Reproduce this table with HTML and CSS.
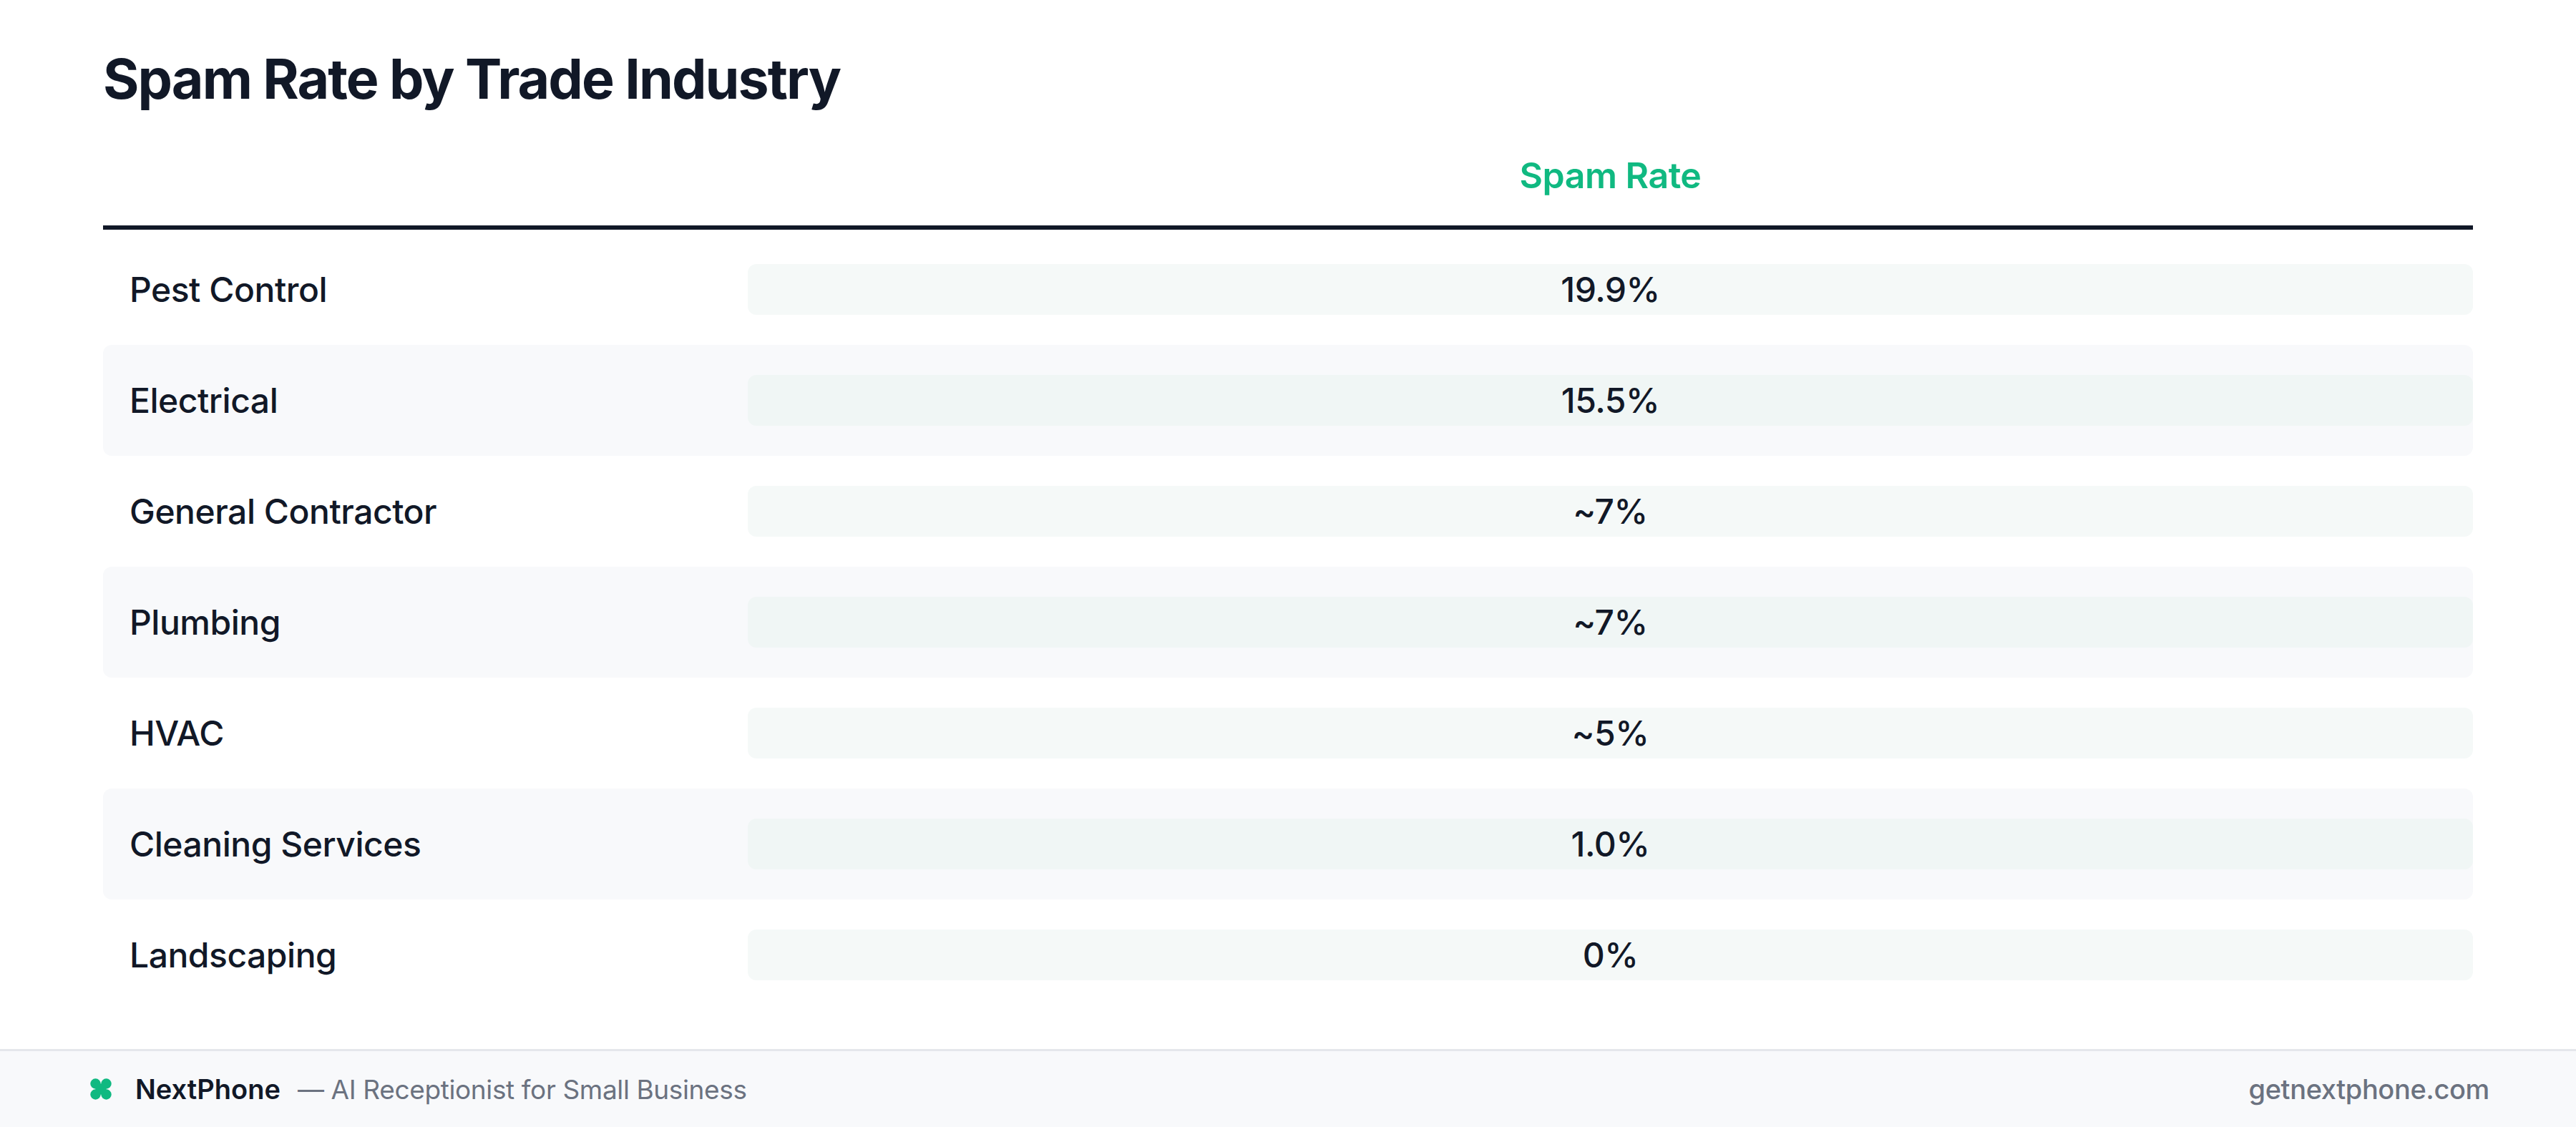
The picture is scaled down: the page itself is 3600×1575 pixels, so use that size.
FILE: index.html
```html
<!DOCTYPE html>
<html lang="en">
<head>
<meta charset="utf-8">
<title>Spam Rate by Trade Industry</title>
<link rel="stylesheet" href="styles.css">
</head>
<body>
<main class="page">
  <h1 class="title">Spam Rate by Trade Industry</h1>
  <div class="table">
    <div class="head">
      <div class="head-label"></div>
      <div class="head-cell">Spam Rate</div>
    </div>
    <div class="rows">
      <div class="row"><div class="label">Pest Control</div><div class="value">19.9%</div></div>
      <div class="row alt"><div class="label">Electrical</div><div class="value">15.5%</div></div>
      <div class="row"><div class="label">General Contractor</div><div class="value">~7%</div></div>
      <div class="row alt"><div class="label">Plumbing</div><div class="value">~7%</div></div>
      <div class="row"><div class="label">HVAC</div><div class="value">~5%</div></div>
      <div class="row alt"><div class="label">Cleaning Services</div><div class="value">1.0%</div></div>
      <div class="row"><div class="label">Landscaping</div><div class="value">0%</div></div>
    </div>
  </div>
</main>
<footer class="footer">
  <div class="brand">
    <svg class="logo" viewBox="0 0 30 30" width="30" height="30" aria-hidden="true">
      <circle cx="7.5" cy="7.5" r="7.2" fill="#10b981"/>
      <circle cx="22.5" cy="7.5" r="7.2" fill="#10b981"/>
      <circle cx="7.5" cy="22.5" r="7.2" fill="#10b981"/>
      <circle cx="22.5" cy="22.5" r="7.2" fill="#10b981"/>
      <rect x="7.5" y="7.5" width="15" height="15" fill="#10b981"/>
    </svg>
    <span class="brand-name">NextPhone</span>
    <span class="tagline">— AI Receptionist for Small Business</span>
  </div>
  <div class="site">getnextphone.com</div>
</footer>
</body>
</html>
```

FILE: styles.css
```css
html, body {
  margin: 0;
  padding: 0;
}

body {
  height: 100vh;
  display: flex;
  flex-direction: column;
  background: #ffffff;
  color: #111827;
  font-family: Inter, "Noto Sans", "Liberation Sans", sans-serif;
  overflow: hidden;
}

.page {
  flex: 1;
  padding: 72px 144px 0;
}

.title {
  margin: 0;
  font-size: 77px;
  line-height: 1;
  font-weight: 700;
  letter-spacing: -0.025em;
  color: #111827;
}

.table {
  display: flex;
  flex-direction: column;
}

.head {
  display: grid;
  grid-template-columns: 901px 1fr;
  padding: 71px 0 45px;
  border-bottom: 6px solid #111827;
}

.head-cell {
  text-align: center;
  font-size: 50px;
  line-height: 1;
  font-weight: 600;
  color: #10b981;
  letter-spacing: -0.01em;
}

.rows {
  display: flex;
  flex-direction: column;
  margin-top: 6px;
}

.row {
  display: grid;
  grid-template-columns: 901px 1fr;
  align-items: center;
  height: 155px;
  border-radius: 12px;
}

.row.alt {
  background: #f8f9fb;
}

.label {
  padding-left: 37px;
  font-size: 48px;
  line-height: 1;
  font-weight: 500;
  letter-spacing: -0.01em;
  color: #111827;
}

.value {
  height: 71px;
  display: flex;
  align-items: center;
  justify-content: center;
  border-radius: 12px;
  background: #f5f9f8;
  font-size: 48px;
  font-weight: 500;
  color: #111827;
  letter-spacing: -0.01em;
}

.row.alt .value {
  background: #f0f6f5;
}

.footer {
  height: 106px;
  flex: none;
  border-top: 3px solid #e5e7eb;
  background: #f8f9fb;
  display: flex;
  align-items: center;
  justify-content: space-between;
  padding: 0 121px 0 126px;
}

.brand {
  display: flex;
  align-items: center;
}

.logo {
  display: block;
  margin-right: 33px;
}

.brand-name {
  font-size: 38px;
  font-weight: 600;
  color: #111827;
}

.tagline {
  margin-left: 24px;
  font-size: 37px;
  font-weight: 400;
  color: #6b7280;
  letter-spacing: -0.01em;
}

.site {
  font-size: 38px;
  font-weight: 500;
  color: #6b7280;
  letter-spacing: -0.01em;
}
```
